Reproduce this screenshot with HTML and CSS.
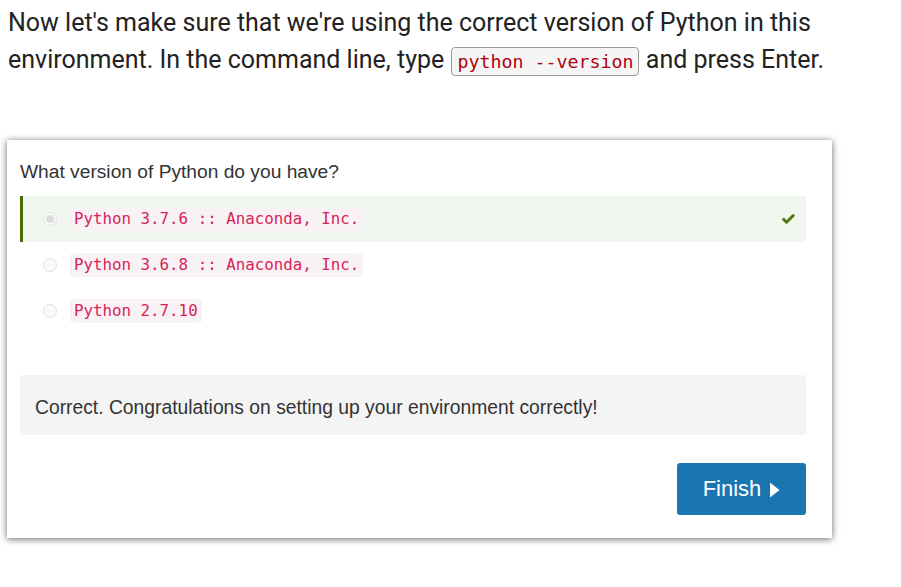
FILE: index.html
```html
<!DOCTYPE html>
<html>
<head>
<meta charset="utf-8">
<link rel="stylesheet" href="styles.css">
</head>
<body>
<p class="intro">Now let's make sure that we're using the correct version of Python in this environment. In the command line, type <code class="cmd">python --version</code> and press Enter.</p>
<div class="card">
  <div class="question">What version of Python do you have?</div>
  <ul class="options">
    <li class="option correct">
      <span class="radio checked"></span>
      <code class="ans">Python 3.7.6 :: Anaconda, Inc.</code>
      <svg class="check" viewBox="0 0 16 12" width="15" height="11"><path d="M0.6 6 L2.9 3.7 L5.9 6.7 L12.9 -0.3 L15.2 2 L5.9 11.3 Z" fill="#4b7a0e"/></svg>
    </li>
    <li class="option">
      <span class="radio"></span>
      <code class="ans">Python 3.6.8 :: Anaconda, Inc.</code>
    </li>
    <li class="option">
      <span class="radio"></span>
      <code class="ans">Python 2.7.10</code>
    </li>
  </ul>
  <div class="feedback">Correct. Congratulations on setting up your environment correctly!</div>
  <div class="actions">
    <button class="finish">Finish <svg class="tri" viewBox="0 0 11 16" width="11" height="16"><path d="M1 0.5 L10.5 8 L1 15.5 Z" fill="#fff"/></svg></button>
  </div>
</div>
</body>
</html>
```

FILE: styles.css
```css
html, body {
  margin: 0;
  padding: 0;
  background: #fff;
}
body {
  padding: 4px 8px 40px 8px;
}
.intro {
  margin: 0;
  font-family: Roboto, "Liberation Sans", sans-serif;
  font-size: 25px;
  line-height: 37px;
  color: #222;
}
.cmd {
  display: inline-block;
  font-family: "DejaVu Sans Mono", monospace;
  font-size: 18.3px;
  line-height: 27px;
  color: #b00010;
  background: #f5f5f5;
  border: 1px solid #999;
  border-radius: 4px;
  padding: 0 4px 0 5px;
  margin: 0 1px;
}
.card {
  margin: 62px 0 0 -1px;
  width: 825px;
  box-sizing: border-box;
  padding: 21px 26px 23px 13px;
  background: #fff;
  box-shadow: 0 1px 7px rgba(0, 0, 0, 0.6);
  font-family: "Liberation Sans", Arial, sans-serif;
  color: #333;
}
.question {
  font-size: 19.2px;
  line-height: 22px;
  padding-bottom: 13px;
}
.options {
  list-style: none;
  margin: 0;
  padding: 0;
}
.option {
  height: 46px;
  display: flex;
  align-items: center;
  padding: 0 10px 0 23px;
  box-sizing: border-box;
  border-left: 3px solid transparent;
}
.option.correct {
  background: #eff7ee;
  border-left-color: #4a6b0a;
}
.radio {
  width: 14px;
  height: 14px;
  border-radius: 50%;
  border: 1px solid #e0e0e0;
  background: #fafafa;
  box-sizing: border-box;
  margin-left: -3px;
  margin-right: 13px;
  display: flex;
  align-items: center;
  justify-content: center;
  flex: none;
}
.radio.checked::after {
  content: "";
  width: 8px;
  height: 8px;
  border-radius: 50%;
  background: #dcdcdc;
}
.ans {
  font-family: "DejaVu Sans Mono", monospace;
  font-size: 15.8px;
  line-height: 24px;
  color: #d6245a;
  background: #f9f2f4;
  border-radius: 4px;
  padding: 0 4px;
}
.check {
  margin-left: auto;
}
.feedback {
  margin-top: 41px;
  height: 60px;
  box-sizing: border-box;
  display: flex;
  align-items: center;
  padding: 5px 15px 0 15px;
  background: #f4f4f4;
  border-radius: 3px;
  font-size: 19.3px;
}
.actions {
  display: flex;
  justify-content: flex-end;
  margin-top: 28px;
}
.finish {
  width: 129px;
  height: 52px;
  background: #1a76b0;
  color: #fff;
  border: none;
  border-radius: 3px;
  font-family: "Liberation Sans", Arial, sans-serif;
  font-size: 22px;
  display: flex;
  align-items: center;
  justify-content: center;
  gap: 8px;
  padding: 0;
}
.tri {
  margin-top: 1px;
}
```
